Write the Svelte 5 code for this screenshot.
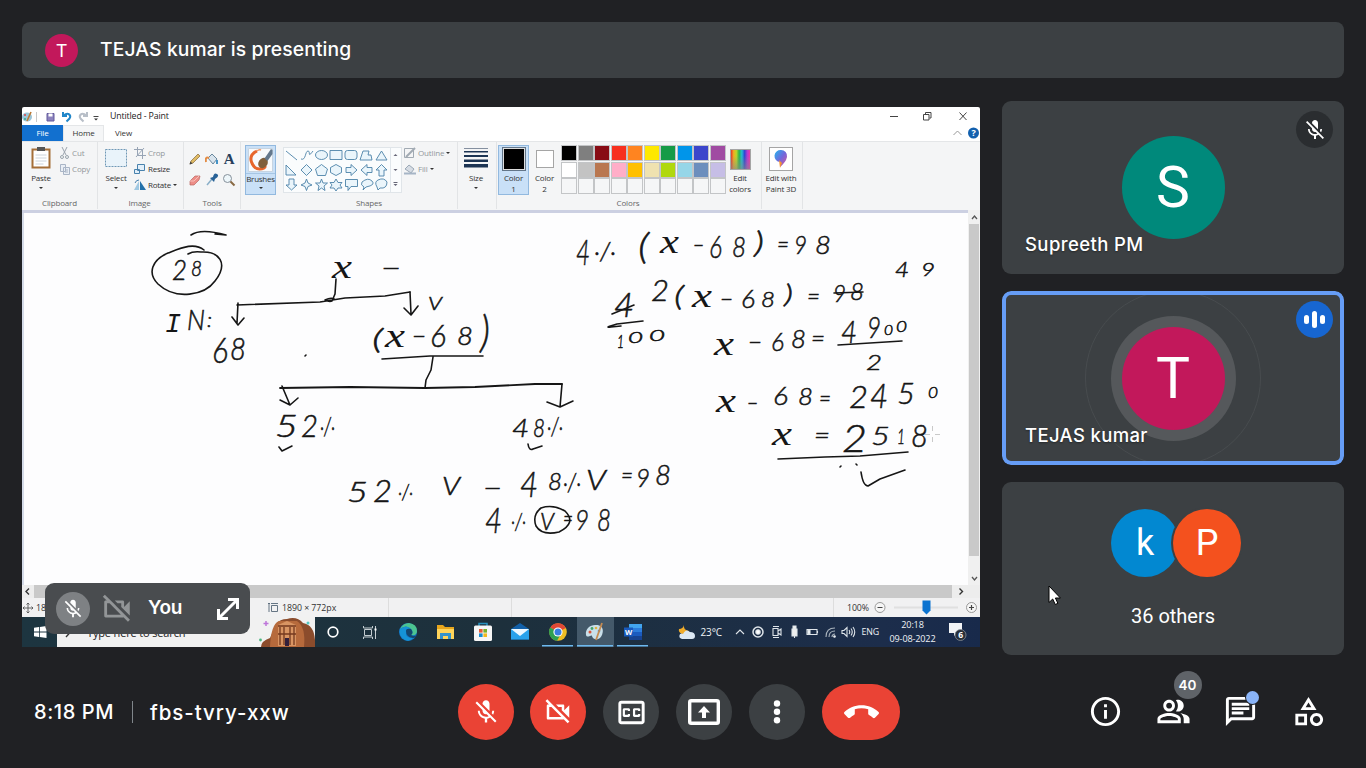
<script>
  const micOff = 'M19 11h-1.7c0 .74-.16 1.43-.43 2.05l1.23 1.23c.56-.98.9-2.09.9-3.28zm-4.02.17c0-.06.02-.11.02-.17V5c0-1.66-1.34-3-3-3S9 3.34 9 5v.18l5.98 5.99zM4.27 3L3 4.27l6.01 6.01V11c0 1.66 1.33 3 2.99 3 .22 0 .44-.03.65-.08l1.66 1.66c-.71.33-1.5.52-2.31.52-2.76 0-5.3-2.1-5.3-5.1H5c0 3.41 2.72 6.23 6 6.72V21h2v-3.28c.91-.13 1.77-.45 2.54-.9L19.73 21 21 19.73 4.27 3z';
  const camOff = 'M9.56 8l-2-2-4.15-4.14L2 3.27 4.73 6H4c-.55 0-1 .45-1 1v10c0 .55.45 1 1 1h12c.21 0 .39-.08.55-.18L19.73 21l1.41-1.41-8.86-8.86L9.56 8zM5 16V8h1.73l8 8H5zm10-8v2.61l6 6V6.5l-4 4V7c0-.55-.45-1-1-1h-5.61l2 2H15z';
  const captions = 'M19 4H5c-1.11 0-2 .9-2 2v12c0 1.1.89 2 2 2h14c1.1 0 2-.9 2-2V6c0-1.1-.9-2-2-2zm0 14H5V6h14v12zM7 15h3c.55 0 1-.45 1-1v-1H9.5v.5h-2v-3h2v.5H11v-1c0-.55-.45-1-1-1H7c-.55 0-1 .45-1 1v4c0 .55.45 1 1 1zm7 0h3c.55 0 1-.45 1-1v-1h-1.5v.5h-2v-3h2v.5H18v-1c0-.55-.45-1-1-1h-3c-.55 0-1 .45-1 1v4c0 .55.45 1 1 1z';
  const hangup = 'M12 9c-1.6 0-3.15.25-4.6.72v3.1c0 .39-.23.74-.56.9-.98.49-1.87 1.12-2.66 1.85-.18.18-.43.28-.7.28-.28 0-.53-.11-.71-.29L.29 13.08c-.18-.17-.29-.42-.29-.7 0-.28.11-.53.29-.71C3.34 8.78 7.46 7 12 7s8.66 1.78 11.71 4.67c.18.18.29.43.29.71 0 .28-.11.53-.29.71l-2.48 2.48c-.18.18-.43.29-.71.29-.27 0-.52-.11-.7-.28-.79-.74-1.69-1.36-2.67-1.85-.33-.16-.56-.5-.56-.9v-3.1C15.15 9.25 13.6 9 12 9z';
  const info = 'M11 7h2v2h-2zm0 4h2v6h-2zm1-9C6.48 2 2 6.48 2 12s4.48 10 10 10 10-4.48 10-10S17.52 2 12 2zm0 18c-4.41 0-8-3.59-8-8s3.59-8 8-8 8 3.59 8 8-3.59 8-8 8z';
  const people = 'M16.67 13.13C18.04 14.06 19 15.32 19 17v3h4v-3c0-2.18-3.57-3.47-6.33-3.87zM15 12c2.21 0 4-1.79 4-4s-1.79-4-4-4c-.47 0-.91.1-1.33.24C14.5 5.27 15 6.58 15 8s-.5 2.73-1.33 3.76c.42.14.86.24 1.33.24zM9 12c2.21 0 4-1.79 4-4s-1.79-4-4-4-4 1.79-4 4 1.79 4 4 4zm0-6c1.1 0 2 .9 2 2s-.9 2-2 2-2-.9-2-2 .9-2 2-2zm0 7c-2.67 0-8 1.34-8 4v3h16v-3c0-2.66-5.33-4-8-4zm6 5H3v-.99C3.2 16.29 6.3 15 9 15s5.8 1.29 6 2v1z';
  const chat = 'M4 4h16v12H5.17L4 17.17V4m0-2c-1.1 0-1.99.9-1.99 2L2 22l4-4h14c1.1 0 2-.9 2-2V4c0-1.1-.9-2-2-2H4zm2 10h8v2H6v-2zm0-3h12v2H6V9zm0-3h12v2H6V6z';
  const activities = 'M12 2l-5.5 9h11L12 2zm0 3.84L13.93 9h-3.87L12 5.84zM17.5 13c-2.49 0-4.5 2.01-4.5 4.5s2.01 4.5 4.5 4.5 4.5-2.01 4.5-4.5-2.01-4.5-4.5-4.5zm0 7c-1.38 0-2.5-1.12-2.5-2.5s1.12-2.5 2.5-2.5 2.5 1.12 2.5 2.5-1.12 2.5-2.5 2.5zM3 21.5h8v-8H3v8zm2-6h4v4H5v-4z';

  const palette = ['#000','#7f7f7f','#880c15','#f7301f','#ff8420','#fee800','#169b47','#0095ea','#3c46cb','#a04ba2',
    '#fff','#c3c3c3','#b97750','#ffaec8','#ffc000','#efe2b0','#b0d80e','#96d6e8','#6c8ebd','#c6bee6',
    '','','','','','','','','',''];

  // Each mark is: character, left, top, right, bottom
  const rows = [
    '2 172 260 187 280|8 191 260 202 276',
    'x 329 262 355 278|− 381 267 401 267',
    'I 165 312 181 332|N 187 310 205 330|: 207 312 212 327',
    '6 212 338 228 363|8 230 338 246 360',
    'V 428 297 442 310|( 372 328 383 354|x 383 332 407 347|− 412 335 426 335|6 430 325 446 347|8 457 327 473 345|) 480 315 490 355',
    '5 275 415 298 437|2 301 415 318 437|·/· 320 417 335 436',
    '4 512 418 529 437|8 533 419 545 437|·/· 547 418 563 436',
    '5 347 482 368 502|2 373 480 392 502|·/· 398 484 413 500|V 442 476 460 495|− 483 487 502 487|4 520 472 538 497|8 548 473 562 490|·/· 563 473 581 492|V 586 470 606 490|= 621 475 633 475|9 636 468 650 487|8 655 465 671 485',
    '4 485 508 502 533|·/· 511 513 526 530|V 540 513 554 530|= 563 518 573 518|9 575 510 589 530|8 597 508 611 531',
    '4 576 240 590 265|·/· 594 243 616 261|( 638 233 649 265|x 660 239 679 253|− 693 244 704 244|6 709 235 722 258|8 732 237 746 257|) 754 231 764 258|= 777 244 789 244|9 794 236 807 254|8 815 235 831 254',
    '4 895 262 909 277|9 921 263 935 276',
    '4 614 293 634 317|2 651 280 669 301|( 674 285 684 311|x 688 295 716 307|− 720 298 733 298|6 741 290 755 308|8 761 291 775 307|) 784 284 793 308|= 807 296 820 296|9 833 285 846 302|8 850 283 864 300',
    '1 617 336 624 348|0 628 332 643 343|0 649 330 665 341',
    'x 712 337 736 355|− 748 341 762 341|6 771 332 784 351|8 791 330 806 348|= 811 338 825 338|4 841 320 857 343|9 867 317 881 338|0 884 325 893 335|0 896 321 907 332',
    '2 866 354 882 370',
    'x 711 397 741 412|− 747 402 758 402|6 773 387 788 405|8 798 388 813 405|= 819 398 831 398|2 849 385 868 408|4 870 384 888 408|5 897 383 915 404|0 928 387 938 398',
    'x 768 430 796 445|= 814 435 830 435|2 842 425 867 452|5 871 426 890 445|1 897 428 905 444|8 911 425 928 447'
  ].map(r => r.split('|').map(m => {
    const [c, a, b, d, e] = m.split(' ');
    const [l, t, rt, bt] = [a, b, d, e].map(Number);
    let size = (bt - t) / 0.72, base = bt, kind = 'digit', w = rt - l, left = l;
    if (c === '−' || c === '=') { size = 24; base = t + 8.5; }
    if (c === '(' || c === ')') { size = (bt - t) / 0.92; base = bt - size * 0.18; }
    if (c === 'x') { size = 33; kind = 'var'; w = Math.min(w, 20); left = l + (rt - l - w) / 2; }
    if (c === 'I') kind = 'slab';
    if (c === ':') size = 20;
    return { c, l: left, w, base, size, kind };
  }));

  const trayIcons = ['up', 'rec', 'cam', 'usb', 'bat', 'wifi', 'vol'];
</script>

{#snippet glyph(d, size)}
  <svg width={size} height={size} viewBox="0 0 24 24" fill="currentColor"><path {d} /></svg>
{/snippet}
{#snippet caret()}<i class="caret"></i>{/snippet}

<div class="page">
  <header class="banner">
    <span class="dot">T</span><span class="banner-text">TEJAS kumar is presenting</span>
  </header>

  <main>
    <section class="share">
      <div class="title">
        <svg width="80" height="17" viewBox="0 0 80 17" fill="none">
          <ellipse cx="5" cy="9" rx="5" ry="4.5" fill="#9cc5d8" /><circle cx="3" cy="7" r="1" fill="#d44" /><circle cx="3" cy="11" r="1" fill="#3a8" /><path d="M5 13L9 4" stroke="#bb7a35" stroke-width="1.6" />
          <path d="M14.500 4v10" stroke="#c8c8c8" />
          <path d="M25 5.500h7v7.500h-7z" fill="#8c83bd" stroke="#61589c" /><path d="M26.500 5.500h4v3h-4z" fill="#fff" />
          <path d="M41 4v4h4M41.500 7.500c5-4 8 0 6 3l-3 3" stroke="#2186c9" stroke-width="2" />
          <path d="M65 4v4h-4M64.500 7.500c-5-4-8 0-6 3l3 3" stroke="#b8bfc8" stroke-width="2" />
          <path d="M71.500 8.500h5" stroke="#444" /><path d="M72 10.500h4l-2 2z" fill="#333" />
        </svg>
        <span class="title-text">Untitled - Paint</span>
        <svg class="winbtns" width="80" height="17" viewBox="0 0 80 17" fill="none" stroke="#444">
          <path d="M1 8.500h8M70.500 4.500l7 7.500M77.500 4.500l-7 7.500" /><path d="M34.500 6.500h5.500v5.500h-5.500zM36.500 6v-1.500h5.500v5.500h-1.500" />
        </svg>
      </div>
      <div class="tabs">
        <span class="file">File</span><span class="home">Home</span><span class="view">View</span>
        <svg width="28" height="16" viewBox="0 0 28 16"><path d="M1.500 10l4-4 4 4" fill="none" stroke="#999" /><circle cx="21.500" cy="8" r="5.500" fill="#1260ae" /><text x="21.500" y="11.200" text-anchor="middle" font-size="9" font-weight="700" fill="#fff">?</text></svg>
      </div>

      <div class="ribbon">
        <div class="group clip">
          <div class="body">
            <div class="big paste">
              <svg width="20" height="23" viewBox="0 0 20 23"><path d="M1.500 3.500h17v18h-17z" fill="#fff" stroke="#a56f38" stroke-width="2" /><path d="M6 1h8v4H6z" fill="#555" /><path d="M4.500 9h11M4.500 12h11M4.500 15h11M4.500 18h8" stroke="#ccd4dc" /></svg>
              <span>Paste</span>{@render caret()}
            </div>
            <div class="list off">
              <div><svg width="10" height="12" viewBox="0 0 10 12" fill="none" stroke="#9aa3ac"><path d="M2 0l4 8M7 0L3 8" /><circle cx="2" cy="10" r="1.500" /><circle cx="7" cy="10" r="1.500" /></svg>Cut</div>
              <div><svg width="10" height="12" viewBox="0 0 10 12" fill="#e9eef5" stroke="#a9b5c6"><path d="M.5 1.500h5v7h-5zM3.500 4.500h6v7h-6zM5 7h3M5 9h3" /></svg>Copy</div>
            </div>
          </div>
          <div class="label">Clipboard</div>
        </div>

        <div class="group image">
          <div class="body">
            <div class="big">
              <svg width="22" height="23" viewBox="0 0 22 23"><path d="M.5 3.500h21v17H.5z" fill="#e9f3fa" stroke="#6f98b6" stroke-dasharray="2 1" /></svg>
              <span>Select</span>{@render caret()}
            </div>
            <div class="list">
              <div class="off"><svg width="12" height="12" viewBox="0 0 12 12" fill="none" stroke="#97a4b5"><path d="M3.500 0v8.500h8.500M0 2.500h8.500v9.500M2 10l8-9" /></svg>Crop</div>
              <div><svg width="12" height="12" viewBox="0 0 12 12" fill="#e2effa" stroke="#4882ad"><path d="M3.500 1.500h7v6h-7zM.5 6.500h5v4h-5z" /></svg>Resize</div>
              <div><svg width="12" height="12" viewBox="0 0 12 12"><path d="M5 2v9H0z" fill="#a0c8e2" /><path d="M6 2v9h6z" fill="#2371aa" /><path d="M1 4q1-3 4-3" fill="none" stroke="#457fae" /></svg>Rotate{@render caret()}</div>
            </div>
          </div>
          <div class="label">Image</div>
        </div>

        <div class="group tools">
          <div class="body toolgrid">
            <svg viewBox="0 0 14 14"><path d="M2 12l1-3 7-7 2 2-7 7z" fill="#dfbb65" stroke="#85683a" stroke-width=".7" /><path d="M1.500 12.500l1-3 2 2z" fill="#444" /></svg>
            <svg viewBox="0 0 14 14"><path d="M3 6l4-4 5 5-4 5z" fill="#d9e4ed" stroke="#69889e" /><path d="M1 10Q0 4 4 6" fill="none" stroke="#e38c45" stroke-width="2" /><path d="M12 8v4" stroke="#4393c7" stroke-width="2" /></svg>
            <svg viewBox="0 0 14 14"><text x="7" y="12" text-anchor="middle" font-family="Liberation Serif, serif" font-size="15" font-weight="700" fill="#263e5c">A</text></svg>
            <svg viewBox="0 0 14 14"><path d="M2 8l5-5h5l-1 4-5 5H2z" fill="#ed8e88" stroke="#b96763" stroke-width=".7" /><path d="M2 8h4l5-5" fill="none" stroke="#f7beb9" /></svg>
            <svg viewBox="0 0 14 14"><path d="M2 12l5-6" stroke="#8aafc8" stroke-width="1.500" /><path d="M5 5l4 4 1-3q5-3 2-5T8 4z" fill="#286297" /></svg>
            <svg viewBox="0 0 14 14"><circle cx="5.500" cy="5.500" r="4" fill="#edf6fa" stroke="#85909a" /><path d="M8.500 8.500l4 4" stroke="#886943" stroke-width="2" /></svg>
          </div>
          <div class="label">Tools</div>
        </div>

        <div class="brush">
          <svg width="30" height="27" viewBox="0 0 30 27"><path d="M2.500 2.500h24v23h-24z" fill="#f8fafc" stroke="#c7d4e1" /><path d="M11 5Q3 9 5.500 16t8 7q5 0 6-3" fill="none" stroke="#e7662c" stroke-width="3" /><path d="M11 5q2-2 4-1" fill="none" stroke="#f09a6a" stroke-width="1.500" /><ellipse cx="17" cy="17" rx="4.500" ry="5.500" fill="#80603c" transform="rotate(35 17 17)" /><path d="M18.500 12.500L25 3l1.500 1v4l-5 7z" fill="#64788c" /></svg>
          <hr /><span>Brushes</span>{@render caret()}
        </div>

        <div class="group shapes">
          <div class="body">
            <div class="gallery">
              <svg width="117" height="44" viewBox="1 0 117 44" fill="#eaf5fb" stroke="#4c82a8" stroke-width=".9">
                <path d="M3 3l11 9" /><path d="M18 11c5 2 4-8 7-8s-1 8 5 0" fill="none" /><ellipse cx="38.500" cy="7" rx="6" ry="4.500" /><path d="M47 2.500h12v9H47z" /><rect x="62" y="2.500" width="12" height="9" rx="2.500" /><path d="M77 12l3-9h6l-1 4h3l1 5z" /><path d="M98.500 3l5.500 9H93z" />
                <path d="M3 17v10h10z" /><path d="M23.500 16.500l5.500 5.500-5.500 5.500-5.500-5.500z" /><path d="M38.500 16.500l6 4.500-2 6.500h-8l-2-6.500z" /><path d="M53 16.500l5.500 3v5l-5.500 3-5.500-3v-5z" /><path d="M63 19.500h5v-3l6 5.500-6 5.500v-3h-5z" /><path d="M89 19.500h-5v-3l-6 5.500 6 5.500v-3h5z" /><path d="M96 28v-6h-3l5.500-5.500L104 22h-3v6z" />
                <path d="M6 31v6H3l5.500 5 5.500-5h-3v-6z" /><path d="M23.500 31l1.500 4 4 2-4 1.500-1.500 4-1.500-4-4-1.500 4-2z" /><path d="M38.500 31l1.500 4h4.500l-3.500 3 1 4.500-3.500-2.500-3.500 2.500 1-4.500-3.500-3H37z" /><path d="M53 31l2 3.500h4L57 37l2 3h-4l-2 3-2-3h-4l2-3-2-2.500h4z" /><path d="M62.500 31.500h12v7H68l-3 4v-4h-2.500z" /><path d="M81 39q-4-2-2-5 6-5 10-1t-6 6l-3 3z" /><path d="M94 39q-3-5 1-7 6-3 9 2 0 7-7 6l-2 2z" />
                <path d="M107.500 0v44" stroke="#dce3e9" /><g fill="#667" stroke="none"><path d="M110.500 8h4l-2-2z" /><path d="M110.500 21h4l-2 2zM110.500 36h4l-2 2zM110.500 34h4v1h-4z" /></g>
              </svg>
            </div>
            <div class="list off">
              <div><svg width="12" height="12" viewBox="0 0 12 12" fill="none" stroke="#a1aab3"><path d="M.5 1.500h9v9h-9z" /><path d="M2 10L11 1" stroke-width="2" /></svg>Outline{@render caret()}</div>
              <div><svg width="12" height="12" viewBox="0 0 12 12"><path d="M1 6l4-4 5 4-3 4z" fill="#d6dce4" stroke="#9aa8b6" /><path d="M0 9.500h12v2H0z" fill="#a6b5c6" /></svg>Fill{@render caret()}</div>
            </div>
          </div>
          <div class="label">Shapes</div>
        </div>

        <div class="group size">
          <div class="big"><svg width="24" height="23" viewBox="0 0 24 23"><path d="M0 2h24v1H0z" fill="#8590a0" /><path d="M0 5h24v1.500H0zM0 9h24v2H0zM0 13.500h24v2.500H0zM0 18h24v3.500H0z" fill="#1c3453" /></svg><span>Size</span>{@render caret()}</div>
        </div>

        <div class="group colors">
          <div class="body">
            <div class="color active"><b class="sw black"></b><span>Color<br />1</span></div>
            <div class="color"><b class="sw white"></b><span>Color<br />2</span></div>
            <div class="palette">
              {#each palette as p}<i style:background={p || '#f5f6f7'}></i>{/each}
            </div>
            <div class="color edit"><b class="sw rainbow"></b><span>Edit<br />colors</span></div>
          </div>
          <div class="label">Colors</div>
        </div>
        <div class="group three">
          <div class="color"><b class="sw p3d"><svg width="22" height="22" viewBox="0 0 22 22"><defs><linearGradient id="pin" x2="1" y2="1"><stop offset="0" stop-color="#22b7ee" /><stop offset=".5" stop-color="#7168dc" /><stop offset="1" stop-color="#e45493" /></linearGradient></defs><path d="M11 2a6 6 0 0 1 6 7q-1 5-7 10V14A6 6 0 0 1 11 2z" fill="url(#pin)" /><path d="M9 12l3 3-2 5z" fill="#f79530" /></svg></b><span>Edit with<br />Paint 3D</span></div>
        </div>
      </div>

      <div class="work">
        <svg class="canvas" width="946" height="375" viewBox="22 210 946 375">
          <rect x="22" y="210" width="946" height="375" fill="#fdfdfe" /><rect x="22" y="210" width="946" height="3" fill="#ccd0e2" /><rect x="22" y="213" width="2" height="372" fill="#d5dbe8" />
          {#each rows as row}
            <g>
              {#each row as m}<text class={m.kind} x={m.l} y={m.base} font-size={m.size} textLength={m.w} lengthAdjust="spacingAndGlyphs">{m.c}</text>{/each}
            </g>
          {/each}
          <g fill="none" stroke="#161616" stroke-width="1.600" stroke-linecap="round" stroke-linejoin="round">
            <path d="M191 235Q201 228 226 235M215 234l11 1" />
            <path d="M204 250C194 242 181 248 168 253C152 260 147 273 158 284C176 301 205 295 215 281C229 263 219 251 201 252Q193 251 188 254" />
            <path d="M336 279l-1 15-3 7q-3 1-7-1 6-3 9-1M237 305L320 302L345 298L385 296L410 292M238 303l-1 20M232 317l6 8 6-7" />
            <path d="M410 292l1 22M404 308l7 7 7-9M305 356l1-1" />
            <path d="M382 359L430 356L483 356M433 357L431 370L426 380L425 388" />
            <path d="M280 388L350 387L425 388L475 387L535 384H562" stroke-width="1.800" /><path d="M282 386l8 19M280 400l10 5 8-7M562 384l-2 23M547 402l13 5 13-6" />
            <path d="M279 447l3 4 10-5M528 444q1 7 5 5l9-3" />
            <path d="M541 508Q532 515 536 526Q542 536 559 532Q577 523 565 511Q553 504 541 508z" />
            <path d="M643 321l-26 3q-14 4-6 3l10-1M612 314l22-9M834 293l29-1M838 345l64-4M778 459L825 457L860 456L908 452" />
            <path d="M840 467l1-1M856 464l1 1M861 472q2 14 7 14l12-7 25-9" />
          </g>
          <path d="M925 434.500h5M935 434.500h5M932.500 426v5M932.500 437v5" stroke="#c9c9c9" />
        </svg>
        <div class="vbar"><svg width="12" height="375" viewBox="0 0 12 375" fill="none" stroke="#555" stroke-width="1.300"><rect x="1" y="14" width="10" height="332" fill="#c9c9c9" stroke="none" /><path d="M4 9l2.500-3L9 9M4 367l2.500 3 2.500-3" /></svg></div>
      </div>
      <div class="hbar"><span><svg width="12" height="13" viewBox="0 0 12 13"><path d="M7 3.500L4 6.500l3 3" /></svg></span><i></i><span><svg width="14" height="13" viewBox="0 0 14 13"><path d="M7.500 3.500l3 3-3 3" /></svg></span></div>

      <div class="status">
        <svg width="10" height="10" viewBox="0 0 10 10" fill="none" stroke="#555"><path d="M5 0v10M0 5h10M3.500 1.500L5 0l1.500 1.500M3.500 8.500L5 10l1.500-1.500M1.500 3.500L0 5l1.500 1.500M8.500 3.500L10 5 8.500 6.500" stroke-width=".9" /></svg>
        <span class="pos">1890</span>
        <span class="dims"><svg width="11" height="10" viewBox="0 0 11 10" fill="none" stroke="#567"><path d="M3.500 2.500h6v6h-6zM1 0v9M0 1l1-1 1 1M3 .5h7" stroke-width=".9" /></svg>1890 × 772px</span>
        <i class="cell"></i><i class="cell two"></i>
        <span class="zoom">100%</span>
        <svg width="112" height="18" viewBox="0 0 112 18"><g fill="#f6f6f6" stroke="#999"><circle cx="8" cy="8.500" r="5" /><circle cx="99.500" cy="8.500" r="5" /></g><path d="M5.500 8.500h5M97 8.500h5M99.500 6v5" stroke="#444" stroke-width="1.200" /><path d="M22 7.500h64v2H22z" fill="#e0e0e0" /><path d="M50.500 1.500h8v10l-4 4-4-4z" fill="#0b73d0" /></svg>
      </div>

      <div class="taskbar">
        <div class="start"><svg width="14" height="14" viewBox="0 0 14 14" fill="#fff"><path d="M1 2.700l5-.7v4.600H1zM6.800 1.900L13.500 1v5.600H6.800zM1 7.400h5V12l-5-.7zM6.800 7.400h6.700V13l-6.700-.9z" /></svg></div>
        <div class="search">
          <svg class="lens" width="14" height="14" viewBox="0 0 14 14" fill="none" stroke="#333" stroke-width="1.300"><circle cx="9" cy="4.500" r="3.500" /><path d="M6.500 7L2 12" /></svg>
          <span>Type here to search</span>
          <svg class="petra" width="56" height="29" viewBox="0 0 56 29"><path d="M2 29q0-6 9-9l6-14q4-5 11-5 10-3 16 4 11 2 12 17v7z" fill="#8b4c2c" /><path d="M11 29q1-23 9-26h18q9 6 7 26z" fill="#b66a3c" /><path d="M19 28V7l9-4 9 4v21z" fill="#d99563" /><path d="M19 8h18M19 16h18M21 9v18M25 9v18M31 9v18M35 9v18" stroke="#74391f" stroke-width="1.300" /><path d="M26 28v-8h4v8z" fill="#32203c" /><path d="M7 3v5M4.500 5.500h5" stroke="#be75da" stroke-width="1.500" /><circle cx="49" cy="5" r="1.500" fill="#55c9c2" /><circle cx="1.500" cy="22" r="1.400" fill="#49b57e" /></svg>
        </div>
        <div class="app"><svg viewBox="0 0 20 20"><circle cx="10" cy="10" r="4.800" fill="none" stroke="#fff" stroke-width="1.700" /></svg></div>
        <div class="app"><svg viewBox="0 0 20 20" fill="none" stroke="#c3ccd0"><path d="M4.500 7.500h7v6h-7zM3.500 4v2h9V4M3.500 17v-2h9v2M15.500 4v13" /><path d="M15.500 6.500v2" stroke="#fff" stroke-width="2" /></svg></div>
        <div class="app"><svg viewBox="0 0 20 20"><circle cx="10" cy="10" r="9" fill="#1273c4" /><path d="M2 7Q5 1 11 1q8 1 8 8 0 5-6 4 3-3 0-6-5-5-11 0z" fill="#4cc491" /><path d="M2 7q7-5 11 0-4-1-5 3-1 6 7 6-3 4-8 2-7-4-5-11z" fill="#1593d6" /><path d="M8 9q0-3 5-2 3 4 0 6 3 2 6 0-1 3-4 3-7-1-7-7z" fill="#14476e" /></svg></div>
        <div class="app"><svg viewBox="0 0 20 20"><path d="M2 3h6l2 2h9v12H2z" fill="#e7a61d" /><path d="M2 7h17v10H2z" fill="#ffd45a" /><path d="M5 11h11v6h-3v-3H8v3H5z" fill="#3492cb" /></svg></div>
        <div class="app"><svg viewBox="0 0 20 20"><path d="M6 4V1.500h8V4" fill="none" stroke="#2790be" stroke-width="1.500" /><rect x="1" y="3.500" width="18" height="15.500" rx="1.500" fill="#f6f6f6" /><path d="M6 7h3.600v3.600H6z" fill="#e65b38" /><path d="M10.400 7H14v3.600h-3.600z" fill="#79b22c" /><path d="M6 11.400h3.600V15H6z" fill="#168dd3" /><path d="M10.400 11.400H14V15h-3.600z" fill="#f3b91d" /></svg></div>
        <div class="app"><svg viewBox="0 0 20 20"><path d="M1 7l9-6 9 6v10.500H1z" fill="#1260a8" /><path d="M1 7h18v10.500H1z" fill="#29a2eb" /><path d="M1 7h18l-9 7z" fill="#edf8ff" /></svg></div>
        <div class="app run"><svg viewBox="0 0 20 20"><circle cx="10" cy="10" r="8.800" fill="#edbd25" /><path d="M10 10L2.300 5.600A8.800 8.800 0 0 1 17.800 6z" fill="#df4735" /><path d="M10 10L2.300 5.600A8.800 8.800 0 0 0 9 18.800l4-7z" fill="#2ea052" /><circle cx="10" cy="10" r="4.600" fill="#fff" /><circle cx="10" cy="10" r="3.500" fill="#387fe0" /></svg></div>
        <div class="app run lit"><svg viewBox="0 0 20 20"><path d="M10 3c10-1 9 9 5 13-4 3-8 0-8-2s-5 3-6-1C0 7 5 3 10 3z" fill="#c9dfe9" /><circle cx="5" cy="10" r="1.500" fill="#da543b" /><circle cx="7" cy="6.500" r="1.400" fill="#45a36d" /><circle cx="11" cy="6" r="1.300" fill="#e2b340" /><circle cx="14" cy="9" r="1.300" fill="#478aca" /><path d="M11 18l6-17" stroke="#c58b52" stroke-width="1.800" /></svg></div>
        <div class="app run"><svg viewBox="0 0 20 20"><path d="M6 2h13v4H6z" fill="#42a5ee" /><path d="M6 6h13v4H6z" fill="#2c7cdb" /><path d="M6 10h13v4H6z" fill="#1b5bbf" /><path d="M6 14h13v4H6z" fill="#174391" /><path d="M1 5.500h9v9H1z" fill="#195abd" /><text x="5.500" y="12.500" text-anchor="middle" font-size="7.500" font-weight="700" fill="#fff">W</text></svg></div>
        <div class="weather"><svg width="17" height="16" viewBox="0 0 17 16"><path d="M6 1q-1 5 5 6-2 5-7 3-4-2-3-5 4 0 5-4z" fill="#f0ac2b" /><path d="M4 15q-4-1-2-5 2-1 3 0 3-6 7-2 5 0 5 4 0 3-3 3z" fill="#dce8f4" /></svg>23°C</div>
        <div class="tray">
          {#each trayIcons as t}
            <svg viewBox="0 0 16 16" fill="none" stroke="#dfe5ea" stroke-width="1.100">
              {#if t === 'up'}<path d="M4 10l4-4 4 4" />
              {:else if t === 'rec'}<circle cx="8" cy="8" r="5" stroke-width="1.500" /><circle cx="8" cy="8" r="2.200" fill="#fff" />
              {:else if t === 'cam'}<path d="M5 4.500h5v7H5zM10 7l3-2v6l-3-2M5 2.500h6M5 13.500h6" />
              {:else if t === 'usb'}<path d="M6 5h5v7H6zM7 2h3v3H7z" fill="#eee" /><path d="M8.500 12v2" />
              {:else if t === 'bat'}<path d="M3 5.500h10v5H3zM13.500 7v2" /><path d="M4 6.500h2v3H4z" fill="#fff" />
              {:else if t === 'wifi'}<path d="M4 13Q4 4 13 4M7 13q0-6 6-6M10 13q0-3 3-3" stroke="#aab4bd" /><circle cx="12.500" cy="12.500" r=".8" fill="#fff" />
              {:else}<path d="M2 6.500h2l3-3v9l-3-3H2zM9 6q1.500 2 0 4M11 4.500q2.500 3.500 0 7M13 3q3.500 5 0 10" />{/if}
            </svg>
          {/each}
        </div>
        <span class="eng">ENG</span>
        <div class="clock"><span>20:18</span><span>09-08-2022</span></div>
        <svg class="notif" width="24" height="24" viewBox="0 0 24 24"><path d="M3 3h13v10h-5l-3 3v-3H3z" fill="#f2f4f6" /><circle cx="14.500" cy="15" r="5.500" fill="#29303a" stroke="#858d96" stroke-width=".8" /><text x="14.500" y="18.300" text-anchor="middle" font-size="8.500" font-weight="700" fill="#fff">6</text></svg>
      </div>

      <div class="self">
        <span class="selfmic">{@render glyph(micOff, 22)}</span>
        <span class="selfcam">{@render glyph(camOff, 34)}</span>
        <b>You</b>
        <svg width="24" height="24" viewBox="0 0 24 24" fill="none" stroke="#fff" stroke-width="3"><path d="M3 21L21 3M12 2.500h9.500V12M2.500 12v9.500H12" /></svg>
      </div>
    </section>

    <aside>
      <div class="tile">
        <span class="avatar teal">S</span>
        <span class="name">Supreeth PM</span>
        <span class="corner">{@render glyph(micOff, 24)}</span>
      </div>
      <div class="tile talking">
        <span class="ring"></span>
        <span class="halo"><span class="avatar pink">T</span></span>
        <span class="name">TEJAS kumar</span>
        <span class="corner blue"><i></i><i></i><i></i></span>
      </div>
      <div class="tile rest">
        <div class="pair"><span class="mini k">k</span><span class="mini p">P</span></div>
        <span class="others">36 others</span>
      </div>
    </aside>
  </main>

  <footer>
    <div class="meta"><span class="time">8:18 PM</span><i></i><span class="code">fbs-tvry-xxw</span></div>
    <div class="controls">
      <span class="btn red">{@render glyph(micOff, 28)}</span>
      <span class="btn red">{@render glyph(camOff, 30)}</span>
      <span class="btn">{@render glyph(captions, 35)}</span>
      <span class="btn"><svg width="32" height="26" viewBox="0 0 32 26"><rect x="1.700" y="1.700" width="28.600" height="22.600" rx="1.500" fill="none" stroke="#fff" stroke-width="3.400" /><path d="M16 7l6 6.500h-4V19h-4v-5.500h-4z" fill="#fff" /></svg></span>
      <span class="btn"><svg width="8" height="24" viewBox="0 0 8 24" fill="#fff"><circle cx="4" cy="3.500" r="3.200" /><circle cx="4" cy="11.800" r="3.200" /><circle cx="4" cy="20.200" r="3.200" /></svg></span>
      <span class="btn red end">{@render glyph(hangup, 35)}</span>
    </div>
    <div class="side">
      <span>{@render glyph(info, 35)}</span>
      <span>{@render glyph(people, 35)}<b>40</b></span>
      <span>{@render glyph(chat, 35)}<em></em></span>
      <span>{@render glyph(activities, 35)}</span>
    </div>
  </footer>
  <svg class="cursor" width="14" height="21" viewBox="0 0 14 21"><path d="M1 1v16.500l3.700-3.500 2.600 5.500 2.600-1.200-2.500-5.300h5z" fill="#fff" stroke="#000" /></svg>
</div>

<style>
  :global(body) { background: #202124; overflow: hidden; }
  .page { position: relative; box-sizing: border-box; width: 1366px; height: 768px; padding: 22px 22px 0; display: flex; flex-direction: column; background: #202124; color: #fff; font-family: Inter, sans-serif; }
  .page svg { display: block; flex: none; }
  .banner { height: 56px; flex: none; display: flex; align-items: center; gap: 22px; padding-left: 23px; background: #3c4043; border-radius: 8px; }
  .dot { width: 33px; height: 33px; border-radius: 50%; background: #c2185b; display: grid; place-items: center; font: 18px Roboto, sans-serif; }
  .banner-text { font-size: 19.300px; font-weight: 500; letter-spacing: .13px; position: relative; top: -1px; }
  main { display: flex; justify-content: space-between; height: 578px; flex: none; }
  .share { position: relative; width: 958px; height: 540px; margin-top: 29px; background: #fff; color: #333; font: 8px/10px "Open Sans", sans-serif; letter-spacing: -.15px; border-radius: 2px 2px 0 0; overflow: hidden; }
  .title { height: 18px; display: flex; align-items: center; }
  .title-text { font-size: 8.800px; margin-left: 8px; color: #222; }
  .winbtns { margin-left: auto; margin-right: 11px; }
  .tabs { height: 16px; display: flex; align-items: stretch; line-height: 16px; text-align: center; }
  .file { width: 41px; background: #1270cf; color: #fff; }
  .home { width: 41px; background: #f5f6f7; border: 1px solid #e4e6e8; border-bottom: 0; box-sizing: border-box; line-height: 14px; }
  .view { width: 39px; }
  .tabs svg { margin-left: auto; }
  .ribbon { height: 69px; display: flex; background: #f4f5f6; border-top: 1px solid #e4e6e8; box-sizing: border-box; }
  .group { box-sizing: border-box; height: 67px; border-right: 1px solid #e2e4e6; flex: none; }
  .body { height: 55px; display: flex; }
  .label { text-align: center; line-height: 12px; color: #666; }
  .image .label, .shapes .label, .colors .label { position: relative; left: -1px; }
  .caret { display: block; width: 0; height: 0; border: 2px solid transparent; border-top: 2.500px solid #333; border-bottom: 0; }
  .big { display: flex; flex-direction: column; align-items: center; padding-top: 4px; }
  .big span { margin: 4px 0 4px; }
  .clip { width: 76px; }
  .paste { width: 38px; flex: none; }
  .list { padding-top: 3px; }
  .list div { height: 16px; display: flex; align-items: center; gap: 2px; }
  .list .caret { margin-left: 0; }
  .off { color: #92979b; }
  .image { width: 86px; }
  .image .big { width: 36px; flex: none; }
  .image .list div { letter-spacing: -.25px; }
  .tools { width: 57px; }
  .toolgrid { box-sizing: border-box; display: grid; grid-template: 14px 14px / 14px 14px 14px; gap: 7px 3px; padding: 10px 0 0 4px; }
  .brush { width: 31px; height: 50px; box-sizing: border-box; margin: 3px 7px 0 4px; background: #c9e0f7; border: 1px solid #92b9df; display: flex; flex-direction: column; align-items: center; flex: none; letter-spacing: -.25px; }
  .brush hr { width: 100%; margin: 0; border: 0; border-top: 1px solid #a6c6e4; }
  .brush span { margin-bottom: 3px; }
  .shapes { width: 175px; }
  .gallery { margin: 6px 3px 0 1px; height: 44px; width: 117px; outline: 1px solid #e0e5e9; flex: none; background: #fafcfd; }
  .size { width: 39px; }
  .size .big { margin-left: -2px; }
  .colors { width: 265px; }
  .colors .body { padding-left: 1px; }
  .color { width: 31px; height: 50px; box-sizing: border-box; margin-top: 3px; display: flex; flex-direction: column; align-items: center; text-align: center; flex: none; line-height: 10.500px; padding-top: 2px; }
  .active { background: #c9e0f7; box-shadow: inset 0 0 0 1px #92b9df; }
  .sw { display: block; width: 18px; height: 18px; box-sizing: border-box; border: 1px solid #a5a5a5; background: #fff; margin: 3px 0 5px; flex: none; }
  .black { width: 24px; height: 24px; background: #000; border: 1px solid #627588; box-shadow: inset 0 0 0 1px #ddd; margin: 0 0 2px; }
  .palette { display: grid; grid-template-columns: repeat(10, 14px); grid-auto-rows: 14px; gap: 2.500px; padding: 4px 0 0 2px; }
  .palette i { outline: 1px solid #c3c5c7; }
  .edit { margin-left: 0; }
  .rainbow { width: 21px; height: 21px; margin: 2px 0 3px; background: linear-gradient(#fff0 30%, #8889), linear-gradient(90deg, #e3372a, #f0b020, #b8d52a, #29b34d, #25b9d5, #3047d0, #b23bd2, #f135a5); }
  .three { width: 41px; }
  .three .color { width: 38px; white-space: nowrap; }
  .p3d { width: 24px; height: 24px; margin: 0 0 2px; }
  .work { display: flex; height: 375px; }
  .digit { font-family: Lato, sans-serif; font-weight: 300; fill: #161616; font-style: italic; stroke: #161616; stroke-width: .55; }
  .var { font-family: "Liberation Serif", serif; font-style: italic; fill: #161616; }
  .slab { font-family: "Liberation Mono", monospace; font-style: italic; fill: #161616; }
  .canvas text { letter-spacing: 0; }
  .vbar { background: #f0f0f0; }
  .hbar { height: 13px; display: flex; background: #ededed; }
  .hbar i { flex: 1; background: #c9c9c9; }
  .hbar span { width: 12px; }
  .hbar span:last-child { width: 28px; }
  .hbar path { fill: none; stroke: #333; stroke-width: 1.400; }
  .status { height: 19px; display: flex; align-items: center; background: #f1f1f2; font-size: 8.800px; padding-left: 1px; box-sizing: border-box; }
  .pos { width: 232px; margin-left: 3px; flex: none; }
  .dims { display: flex; gap: 3px; width: 120px; align-items: center; flex: none; letter-spacing: -.05px; }
  .cell { width: 123px; height: 19px; border-left: 1px solid #ddd; box-sizing: border-box; flex: none; }
  .two { width: 323px; border-right: 1px solid #ddd; margin-right: 13px; }
  .zoom { width: 25px; flex: none; }
  .taskbar { height: 30px; display: flex; align-items: center; background: linear-gradient(90deg, #1d3540, #1d303c 50%, #1c2d4b 90%, #182a4b); color: #eef2f5; font-size: 9.600px; }
  .start { width: 35px; display: grid; justify-content: center; }
  .search { width: 258px; height: 30px; background: #f1f1f1; color: #222; display: flex; align-items: center; font-size: 11px; flex: none; }
  .search span { position: relative; top: 1px; }
  .lens { margin: 0 9px 0 7px; }
  .petra { margin-left: auto; margin-bottom: -1px; }
  .app { width: 37.500px; height: 30px; box-sizing: border-box; display: grid; place-items: center; flex: none; border-bottom: 1px solid transparent; position: relative; left: -1px; }
  .app svg { width: 20px; height: 20px; }
  .run { background: linear-gradient(#6eb9ee, #6eb9ee) center bottom / 31px 1.500px no-repeat; }
  .lit { background: linear-gradient(#6eb9ee, #6eb9ee) center bottom / 36px 1.500px no-repeat, #44596a; }
  .weather { display: flex; align-items: center; gap: 6px; margin-left: 25px; width: 54px; flex: none; font-size: 10px; }
  .tray { display: grid; grid-template-columns: repeat(7, 16px); gap: 2px; }
  .tray svg { width: 16px; height: 16px; }
  .eng { margin-left: 6px; width: 20px; font-size: 8.800px; }
  .clock { display: flex; flex-direction: column; align-items: center; line-height: 14px; width: 60px; margin-left: 1px; font-size: 9.100px; }
  .notif { margin-left: 3px; }
  .self { position: absolute; left: 23px; top: 476px; width: 205px; height: 51px; box-sizing: border-box; padding: 0 10px 0 11px; border-radius: 9px; background: #494c4f; color: #fff; display: flex; align-items: center; }
  .selfmic { width: 34px; height: 34px; border-radius: 50%; background: #7e8184; display: grid; place-items: center; }
  .selfcam { color: #929597; margin-left: 10px; }
  .self b { font: 600 19px Inter, sans-serif; margin-left: 14px; margin-right: auto; letter-spacing: -.3px; position: relative; top: -1px; }
  aside { display: grid; grid-template-rows: 173px 174px 173px; gap: 17px; margin-top: 23px; width: 342px; align-content: start; }
  .tile { position: relative; box-sizing: border-box; background: #3c4043; border-radius: 9px; display: grid; place-items: center; overflow: hidden; }
  .avatar { width: 103px; height: 103px; border-radius: 50%; display: grid; place-items: center; font: 57px/1 Roboto, sans-serif; }
  .teal { background: #00897b; }
  .pink { background: #c2185b; }
  .halo { width: 125px; height: 125px; border-radius: 50%; background: #55585b; display: grid; place-items: center; }
  .ring { position: absolute; left: 83px; top: -1px; width: 174px; height: 174px; border: 1px solid #484c4f; border-radius: 50%; }
  .talking::after { content: ''; position: absolute; inset: 0; border: 4px solid #669df6; border-radius: 9px; }
  .name { position: absolute; left: 23px; bottom: 18px; font-size: 18.500px; font-weight: 500; line-height: 24px; text-shadow: 0 1px 2px #0006; letter-spacing: .4px; }
  .talking .name { letter-spacing: .35px; }
  .corner { position: absolute; right: 11px; top: 10px; width: 37px; height: 37px; border-radius: 50%; background: #2a2d30; display: flex; align-items: center; justify-content: center; gap: 3px; }
  .blue { background: #1766d1; }
  .blue i { width: 5px; height: 9px; border-radius: 3px; background: #fff; }
  .blue i:nth-child(2) { height: 17px; }
  .rest { display: flex; flex-direction: column; justify-content: flex-start; padding-top: 27px; }
  .pair { display: flex; margin-left: 6px; }
  .mini { width: 68px; height: 68px; border-radius: 50%; display: grid; place-items: center; font: 36px/1 Roboto, sans-serif; }
  .k { background: #0288d1; }
  .p { background: #f4511e; margin-left: -6px; box-shadow: 0 0 0 2px #3c4043; }
  .others { font: 20px/24px Roboto, sans-serif; margin-top: 27px; }
  footer { height: 112px; flex: none; display: flex; align-items: center; }
  .meta { width: 424px; padding-left: 12px; display: flex; align-items: center; font-size: 20px; font-weight: 500; letter-spacing: .6px; }
  .meta i { width: 1px; height: 22px; background: #80868b; margin: 0 17px 0 16px; }
  .time { width: 82px; white-space: nowrap; }
  .code { font-size: 20.500px; letter-spacing: .95px; }
  .controls { display: flex; gap: 17px; }
  .btn { width: 56px; height: 56px; border-radius: 28px; background: #3c4043; display: grid; place-items: center; }
  .red { background: #ea4335; }
  .btn:first-child { margin-right: -1px; }
  .end { width: 78px; }
  .side { display: flex; margin-left: auto; margin-right: 2px; padding-bottom: 2px; }
  .side span { position: relative; width: 67.500px; display: grid; place-items: center; }
  .side b { position: absolute; left: 34px; top: -23px; width: 28px; height: 28px; border-radius: 50%; background: #5f6368; font-size: 13.500px; line-height: 28px; text-align: center; font-weight: 600; }
  .side em { position: absolute; left: 39px; top: -3px; width: 13px; height: 13px; border-radius: 50%; background: #8ab4f8; box-shadow: 0 0 0 1px #202124; }
  .cursor { position: absolute; left: 1048px; top: 585px; }
</style>
